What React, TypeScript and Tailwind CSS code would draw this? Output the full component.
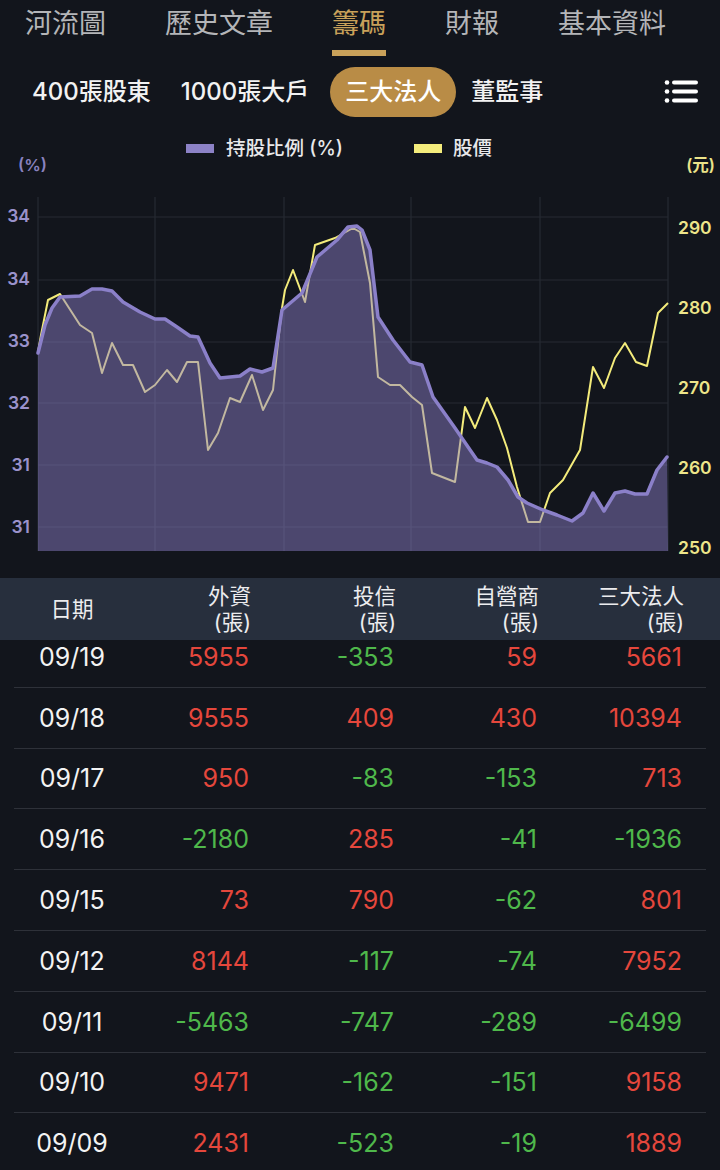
import React from "react";

const holding: [number, number][] = [
  [38, 353], [45, 325], [52, 308], [60, 297], [80, 296], [92, 289], [102, 289], [112, 291],
  [123, 302], [140, 312], [155, 319], [165, 319], [177, 327], [190, 336], [198, 337], [210, 363],
  [220, 378], [240, 376], [250, 369], [262, 372], [273, 368], [282, 310], [302, 293], [317, 257],
  [337, 240], [348, 227], [357, 226], [362, 230], [370, 250], [378, 317], [393, 340], [410, 362],
  [422, 365], [433, 397], [455, 428], [477, 460], [487, 463], [497, 467], [508, 480], [518, 497],
  [527, 503], [543, 510], [557, 515], [572, 521], [583, 513], [593, 493], [604, 511], [615, 493],
  [625, 491], [635, 494], [647, 494], [657, 470], [667, 457],
];

const price: [number, number][] = [
  [38, 352], [41, 335], [48, 300], [60, 294], [80, 325], [92, 333], [102, 373], [112, 343],
  [123, 365], [133, 365], [145, 392], [155, 385], [167, 370], [177, 382], [187, 362], [198, 362],
  [208, 450], [218, 433], [230, 398], [240, 402], [252, 375], [263, 410], [273, 390], [277, 352],
  [282, 308], [285, 290], [293, 270], [305, 302], [315, 245], [335, 238], [353, 228], [360, 232],
  [370, 283], [378, 377], [390, 385], [400, 385], [412, 397], [422, 405], [432, 473], [455, 482],
  [465, 407], [475, 428], [487, 398], [497, 420], [507, 448], [517, 487], [528, 522], [540, 522],
  [550, 493], [563, 480], [580, 450], [593, 367], [604, 388], [615, 358], [625, 343], [636, 362],
  [647, 366], [658, 313], [668, 303],
];

const pts = (a: [number, number][]) => a.map(([x, y]) => `${x},${y}`).join(" ");

const rows: [string, number, number, number, number][] = [
  ["09/19", 5955, -353, 59, 5661],
  ["09/18", 9555, 409, 430, 10394],
  ["09/17", 950, -83, -153, 713],
  ["09/16", -2180, 285, -41, -1936],
  ["09/15", 73, 790, -62, 801],
  ["09/12", 8144, -117, -74, 7952],
  ["09/11", -5463, -747, -289, -6499],
  ["09/10", 9471, -162, -151, 9158],
  ["09/09", 2431, -523, -19, 1889],
];

const Num = ({ v }: { v: number }) => (
  <div className={`text-right ${v < 0 ? "text-[#4fb84b]" : "text-[#e5473c]"}`}>{v}</div>
);

export default function App() {
  const tabs = ["河流圖", "歷史文章", "籌碼", "財報", "基本資料"];
  const sub = ["400張股東", "1000張大戶", "三大法人", "董監事"];
  const leftLabels: [string, number][] = [["34", 216], ["34", 279], ["33", 341], ["32", 403], ["31", 465], ["31", 527]];
  const rightLabels: [string, number][] = [["290", 228], ["280", 308], ["270", 388], ["260", 468], ["250", 548]];
  const hLines = [217, 280, 342, 403, 465, 527];
  const vLines = [38, 155, 284, 411, 540, 668];

  return (
    <div className="w-[720px] h-[1170px] overflow-hidden bg-[#12151c] font-['Inter','Noto_Sans_CJK_TC',sans-serif] flex flex-col">
      {/* top tabs */}
      <div className="h-[60px] flex pl-[25px] gap-[59px] shrink-0">
        {tabs.map((t) => (
          <div key={t} className="flex flex-col items-center">
            <div
              className={`pt-[10px] text-[27px] leading-[28px] ${
                t === "籌碼" ? "text-[#c9a15a]" : "text-[#b4b5b8]"
              }`}
            >
              {t}
            </div>
            {t === "籌碼" && <div className="mt-[12px] h-[6px] w-[54px] bg-[#c9a15a]" />}
          </div>
        ))}
      </div>

      {/* sub tabs */}
      <div className="pt-[7px] flex items-center pl-[17px] pr-[20px] shrink-0">
        {sub.map((s) => (
          <div
            key={s}
            className={`h-[50px] px-[15px] flex items-center rounded-full text-[24px] font-medium ${
              s === "三大法人" ? "bg-[#b98c46] text-white ml-[6px]" : "text-[#f2f2f2]"
            }`}
          >
            {s}
          </div>
        ))}
        <div className="ml-auto">
          <svg width="36" height="26" viewBox="0 0 36 26">
            <circle cx="3" cy="3.5" r="2.3" fill="#fff" />
            <circle cx="3" cy="12.5" r="2.3" fill="#fff" />
            <circle cx="3" cy="21.5" r="2.3" fill="#fff" />
            <rect x="8" y="1.5" width="26" height="4" rx="2" fill="#fff" />
            <rect x="8" y="10.5" width="26" height="4" rx="2" fill="#fff" />
            <rect x="8" y="19.5" width="26" height="4" rx="2" fill="#fff" />
          </svg>
        </div>
      </div>

      {/* legend */}
      <div className="mt-[19px] h-[24px] flex items-center pl-[186px] shrink-0">
        <div className="w-[28px] h-[9px] bg-[#8c82c6]" />
        <div className="ml-[12px] text-[19.5px] leading-[24px] font-medium text-[#e8e8ea]">持股比例 (%)</div>
        <div className="ml-[71px] w-[28px] h-[9px] bg-[#f4ec7c]" />
        <div className="ml-[11px] text-[19.5px] leading-[24px] font-medium text-[#e8e8ea]">股價</div>
      </div>

      {/* units */}
      <div className="-mt-[3px] h-[16px] flex justify-between pl-[18px] pr-[5px] text-[16.5px] leading-[16px] shrink-0">
        <div className="text-[#8a82bf] font-semibold">(%)</div>
        <div className="text-[#ece48a] font-semibold">(元)</div>
      </div>

      {/* chart */}
      <svg width="720" height="405" viewBox="0 173 720 405" className="shrink-0 block">
        {hLines.map((y) => (
          <line key={"h" + y} x1="38" x2="668" y1={y} y2={y} stroke="#262a33" strokeWidth="1.2" />
        ))}
        {vLines.map((x) => (
          <line key={"v" + x} x1={x} x2={x} y1="197" y2="551" stroke="#262a33" strokeWidth="1.2" />
        ))}
        <polyline points={pts(price)} fill="none" stroke="#f3eb7b" strokeWidth="2" strokeLinejoin="round" />
        <polygon points={`38,551 ${pts(holding)} 668,551`} fill="rgba(139,127,200,0.48)" />
        <polyline points={pts(holding)} fill="none" stroke="#8b80c9" strokeWidth="3.5" strokeLinejoin="round" strokeLinecap="round" />
        {leftLabels.map(([t, y], i) => (
          <text key={"l" + i} x="30" y={y + 6} textAnchor="end" fontSize="17.5" fontWeight="600" fill="#9a92cb" fontFamily="Inter, sans-serif">
            {t}
          </text>
        ))}
        {rightLabels.map(([t, y], i) => (
          <text key={"r" + i} x="678" y={y + 6} fontSize="17.5" fontWeight="600" fill="#ede58a" fontFamily="Inter, sans-serif">
            {t}
          </text>
        ))}
      </svg>

      {/* table header */}
      <div className="h-[62px] bg-[#272f3d] shrink-0">
        <div className="mx-[14px] h-full grid grid-cols-[116px_121px_145px_143px_145px] items-center text-[21.5px] leading-[26px] text-[#ececee]">
          <div className="text-center">日期</div>
          <div className="text-right">外資<br />(張)</div>
          <div className="text-right">投信<br />(張)</div>
          <div className="text-right">自營商<br />(張)</div>
          <div className="text-right">三大法人<br />(張)</div>
        </div>
      </div>

      {/* rows */}
      <div className="flex-1 overflow-hidden">
        <div className="-mt-[13px]">
          {rows.map(([d, a, b, c, e]) => (
            <div
              key={d}
              className="mx-[14px] h-[60.8px] border-b border-[#2e3139] grid grid-cols-[116px_119px_145px_143px_145px] items-center text-[25px] leading-[30px]"
            >
              <div className="text-center text-[#f3f3f3]">{d}</div>
              <Num v={a} />
              <Num v={b} />
              <Num v={c} />
              <Num v={e} />
            </div>
          ))}
        </div>
      </div>
    </div>
  );
}
